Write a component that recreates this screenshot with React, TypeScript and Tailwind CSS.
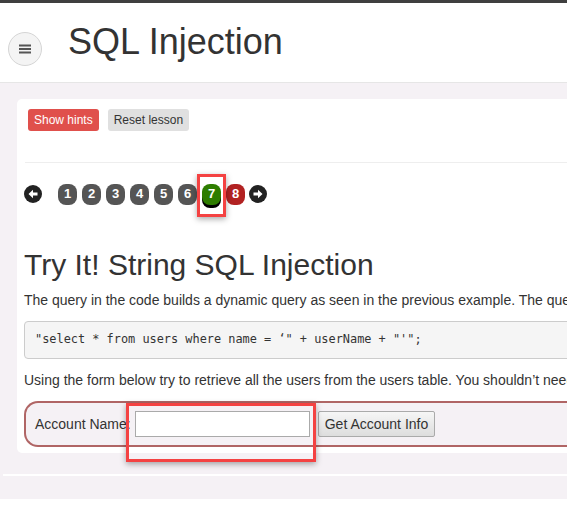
export default function App() {
  const pages = ['1', '2', '3', '4', '5', '6'];
  return (
    <div className="w-[567px] h-[521px] overflow-hidden bg-white font-['Liberation_Sans',Arial,sans-serif] text-[#333]">
      {/* top bar */}
      <div className="h-[3px] bg-[#3f3f3f]" />

      {/* header */}
      <div className="h-[80px] flex items-center border-b border-[#e6e6e6] bg-white">
        <button className="ml-[8px] mt-[13px] w-[34px] h-[34px] rounded-full bg-[#f4f4f4] border border-[#d5d5d5] flex items-center justify-center">
          <svg width="12" height="10" viewBox="0 0 12 10">
            <rect x="0" y="0.5" width="12" height="2" fill="#555" />
            <rect x="0" y="4" width="12" height="2" fill="#555" />
            <rect x="0" y="7.5" width="12" height="2" fill="#555" />
          </svg>
        </button>
        <h1 className="ml-[26px] mt-[-2px] text-[36px] leading-none text-[#333] whitespace-nowrap">SQL Injection</h1>
      </div>

      {/* page body */}
      <div className="bg-[#f5f1f5] pt-[16px] pl-[17px] h-[416px] flex flex-col">
        <div className="bg-white rounded-l-[5px] pb-[6px] w-[560px]">
          <div className="flex gap-[9px] pl-[11px] pt-[10px]">
            <button className="h-[22px] px-[6px] rounded-[3px] bg-[#e0504c] text-white text-[12px]">Show hints</button>
            <button className="h-[22px] px-[6px] rounded-[3px] bg-[#e0e0e0] text-[#333] text-[12px]">Reset lesson</button>
          </div>

          <div className="ml-[8px] mt-[31px] border-t border-[#eeeeee]" />

          {/* lesson navigation */}
          <div className="flex items-center ml-[7px] mt-[20px] h-[22px]">
            <div className="w-[18px] h-[18px] rounded-full bg-[#222] flex items-center justify-center">
              <svg width="12" height="12" viewBox="0 0 12 12">
                <path d="M1.5 6 L6 1.8 L6 4.4 L10.5 4.4 L10.5 7.6 L6 7.6 L6 10.2 Z" fill="#fff" />
              </svg>
            </div>
            <div className="flex gap-[5px] ml-[16px]">
              {pages.map((p) => (
                <div key={p} className="w-[19px] h-[21px] rounded-[8px] bg-[#555555] text-white text-[13px] font-bold flex items-center justify-center">
                  {p}
                </div>
              ))}
              <div className="relative">
                <div className="w-[19px] h-[21px] rounded-[8px] bg-[#2e7d00] text-white text-[13px] font-bold flex items-center justify-center shadow-[0_3px_0_#000]">
                  7
                </div>
                <div className="absolute left-[-5px] top-[-10px] w-[29px] h-[43px] border-[3px] border-[#f44242] shadow-[0_2px_6px_rgba(0,0,0,0.35)]" />
              </div>
              <div className="w-[19px] h-[21px] rounded-[8px] bg-[#b22222] text-white text-[13px] font-bold flex items-center justify-center">
                8
              </div>
            </div>
            <div className="w-[18px] h-[18px] rounded-full bg-[#222] flex items-center justify-center ml-[4px]">
              <svg width="12" height="12" viewBox="0 0 12 12">
                <path d="M10.5 6 L6 1.8 L6 4.4 L1.5 4.4 L1.5 7.6 L6 7.6 L6 10.2 Z" fill="#fff" />
              </svg>
            </div>
          </div>

          <h2 className="ml-[7px] mt-[42px] text-[30px] leading-[36px] whitespace-nowrap text-[#333]">
            Try It! String SQL Injection
          </h2>

          <p className="ml-[7px] mt-[7px] text-[14px] leading-[20px] whitespace-nowrap text-[#333]">
            The query in the code builds a dynamic query as seen in the previous example. The query in the code builds
          </p>

          <div className="ml-[7px] mt-[11px] h-[38px] bg-[#f5f5f5] border border-[#cccccc] rounded-l-[4px] flex items-center pl-[10px]">
            <code className="font-['DejaVu_Sans_Mono',monospace] text-[11.9px] text-[#333] whitespace-nowrap">
              "select * from users where name = ‘" + userName + "'";
            </code>
          </div>

          <p className="ml-[7px] mt-[11px] text-[14px] leading-[20px] whitespace-nowrap text-[#333]">
            Using the form below try to retrieve all the users from the users table. You shouldn’t need to know any
          </p>

          <div className="ml-[7px] mt-[11px] h-[46px] border-2 border-r-0 border-[#b06565] rounded-l-[14px] bg-[#f5f1f5] flex items-center pl-[9px]">
            <span className="text-[14px] text-[#333]">Account Name:</span>
            <div className="relative ml-[4px]">
              <input className="w-[175px] h-[26px] bg-white border border-[#aaaaaa] outline-none" />
              <div className="absolute left-[-9px] top-[-8px] w-[190px] h-[59px] border-[3px] border-[#f44242] shadow-[0_2px_6px_rgba(0,0,0,0.35)] pointer-events-none" />
            </div>
            <button className="ml-[8px] h-[26px] px-[6px] border border-[#aaaaaa] rounded-[2px] bg-gradient-to-b from-[#f6f6f6] to-[#dddddd] text-[14px] text-[#333]">
              Get Account Info
            </button>
          </div>
        </div>

        <div className="ml-[-14px] mt-[21px] border-t-2 border-white" />
      </div>
    </div>
  );
}
